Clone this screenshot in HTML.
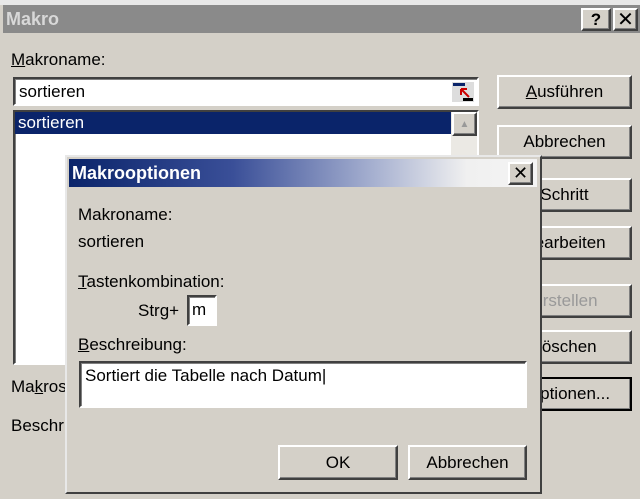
<!DOCTYPE html>
<html><head><meta charset="utf-8"><style>
*{box-sizing:border-box;margin:0;padding:0}
body{width:640px;height:499px;background:#d4d0c8;font-family:"Liberation Sans",sans-serif;font-size:16px;color:#000;position:relative;overflow:hidden}
.a{position:absolute}
.btn{position:absolute;background:#d4d0c8;border:2px solid;border-color:#fff #404040 #404040 #fff;box-shadow:inset -1px -1px 0 #808080;text-align:center;font-size:17px;display:flex;align-items:center;justify-content:center}
.sunk{position:absolute;background:#fff;border:2px solid;border-color:#404040 #fff #fff #404040;box-shadow:inset 1px 1px 0 #808080}
u{text-decoration:underline}
</style></head><body>
<div class="a" style="left:0;top:0;width:640px;height:5px;background:#e8e8e8"></div>
<div class="a" style="left:3px;top:5px;width:637px;height:28px;background:#8a8a8a;color:#d8d8d8;font-weight:bold;font-size:18px;line-height:28px;padding-left:3px">Makro</div>
<div class="btn" style="left:581px;top:8px;width:30px;height:23px;font-weight:bold">?</div>
<div class="btn" style="left:613px;top:8px;width:25px;height:23px;font-size:20px">✕</div>
<div class="a" style="left:11px;top:50px;font-size:17px"><u>M</u>akroname:</div>
<div class="sunk" style="left:13px;top:77px;width:466px;height:29px;font-size:17px;padding:3px 4px">sortieren
<svg class="a" style="left:436px;top:2px" width="24" height="22"><rect x="1" y="1" width="22" height="20" fill="#ddd"/><rect x="2" y="2" width="12" height="3" fill="#0a246a"/><path d="M10 8l8 8M10 8v6M10 8h6" stroke="#c00" stroke-width="2" fill="none"/><rect x="12" y="17" width="10" height="3" fill="#000"/></svg></div>
<div class="sunk" style="left:13px;top:110px;width:466px;height:255px"></div>
<div class="a" style="left:15px;top:112px;width:436px;height:22px;background:#0a246a;color:#fff;font-size:17px;line-height:22px;padding-left:3px">sortieren</div>
<div class="a" style="left:451px;top:112px;width:26px;height:251px;background:#ebe9e4"></div>
<div class="btn" style="left:452px;top:112px;width:25px;height:24px;color:#999;font-size:10px">▲</div>
<div class="btn" style="left:497px;top:75px;width:135px;height:34px"><span><u>A</u>usführen</span></div>
<div class="btn" style="left:497px;top:125px;width:135px;height:34px">Abbrechen</div>
<div class="btn" style="left:497px;top:178px;width:135px;height:34px">Schritt</div>
<div class="btn" style="left:497px;top:226px;width:135px;height:34px">Bearbeiten</div>
<div class="btn" style="left:497px;top:284px;width:135px;height:34px;color:#999">Erstellen</div>
<div class="btn" style="left:497px;top:330px;width:135px;height:34px">Löschen</div>
<div class="btn" style="left:497px;top:377px;width:135px;height:34px;border-color:#000;padding-left:8px">Optionen...</div>
<div class="a" style="left:11px;top:377px;font-size:17px">Ma<u>k</u>ros</div>
<div class="a" style="left:11px;top:416px;font-size:17px">Beschr</div>
<!-- inner dialog -->
<div class="a" style="left:65px;top:155px;width:477px;height:339px;background:#d4d0c8;border:2px solid;border-color:#e8e8e8 #404040 #404040 #e8e8e8"></div>
<div class="a" style="left:69px;top:159px;width:468px;height:28px;background:linear-gradient(90deg,#0a246a 0%,#3a4f98 35%,#a6b0d0 65%,#f0f0f0 85%,#f4f4f4 100%);color:#fff;font-weight:bold;font-size:18px;line-height:28px;padding-left:3px">Makrooptionen</div>
<div class="btn" style="left:508px;top:162px;width:25px;height:23px;font-size:18px">✕</div>
<div class="a" style="left:78px;top:205px;font-size:17px">Makroname:</div>
<div class="a" style="left:78px;top:232px;font-size:17px">sortieren</div>
<div class="a" style="left:78px;top:272px;font-size:17px"><u>T</u>astenkombination:</div>
<div class="a" style="left:138px;top:301px;font-size:17px">Strg+</div>
<div class="sunk" style="left:187px;top:295px;width:30px;height:31px;font-size:17px;padding:3px 3px">m</div>
<div class="a" style="left:78px;top:335px;font-size:17px"><u>B</u>eschreibung:</div>
<div class="sunk" style="left:79px;top:361px;width:448px;height:47px;font-size:17px;padding:3px 4px">Sortiert die Tabelle nach Datum|</div>
<div class="btn" style="left:278px;top:445px;width:120px;height:35px">OK</div>
<div class="btn" style="left:408px;top:445px;width:119px;height:35px">Abbrechen</div>
</body></html>
